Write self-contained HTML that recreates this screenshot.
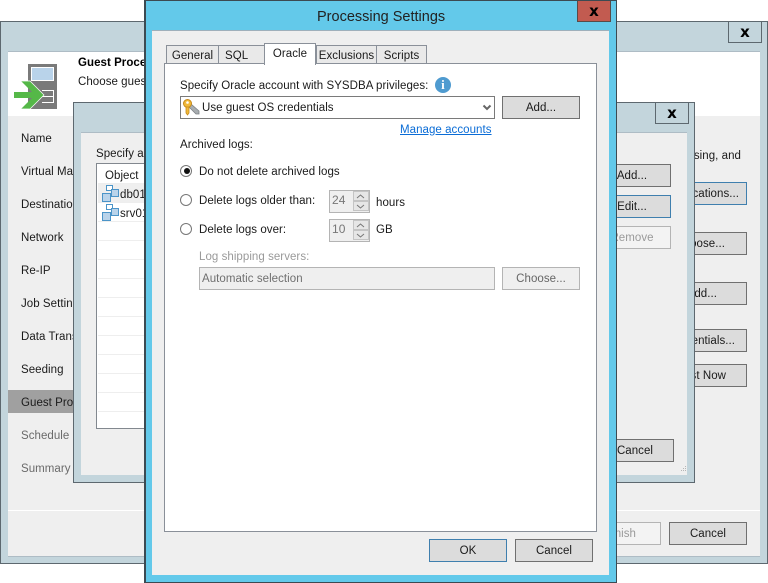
<!DOCTYPE html>
<html><head><meta charset="utf-8"><style>
html,body{margin:0;padding:0;width:768px;height:583px;overflow:hidden;background:#fff}
*{box-sizing:border-box}
body{position:relative;font:11.5px/16px "Liberation Sans",sans-serif;color:#1a1a1a;letter-spacing:.05px}
.a{position:absolute}
.t{position:absolute;white-space:nowrap;height:18px;line-height:18px}
.b{position:absolute;height:23px;border:1px solid #707070;background:#dcdcdc;text-align:center;line-height:23px;white-space:nowrap;overflow:hidden}
.r{text-align:right}
.f{border:1px solid #3f7fae}
.d{background:#f3f3f3;border-color:#b4b4b4;color:#9a9a9a}
.w{position:absolute;border:1px solid #5d686f;background:#c3d5dc}
.c{position:absolute;background:#efefef;border-top:1px solid #aebcc5}
.x{position:absolute;font:bold 15px/20px "DejaVu Sans",sans-serif;text-align:center;letter-spacing:0;color:#000}
.g{color:#6a6a6a}
.tab{position:absolute;top:45px;height:19px;background:#e9e9e9;border:1px solid #8a9099;border-bottom:0;text-align:center;line-height:20px}
.rd{position:absolute;left:180px;width:12px;height:12px;border:1px solid #777;border-radius:50%;background:#fff}
.sp{position:absolute;left:329px;width:41px;height:23px;border:1px solid #b4b4b4;background:#efefef;color:#777;padding-left:2px;line-height:19px;font-size:12px}
.sp i{position:absolute;left:23px;width:16px;height:10px;background:#e6e6e6;border:1px solid #c4c4c4}
.ln{position:absolute;left:98px;width:60px;height:1px;background:#eeeeee}
</style></head><body>

<!-- back window -->
<div class="w" style="left:0;top:21px;width:768px;height:543px"></div>
<div class="a" style="left:728px;top:22px;width:34px;height:21px;border:1px solid #5d686f;border-top:0"></div>
<div class="x" style="left:728px;top:22px;width:34px">x</div>
<div class="c" style="left:8px;top:51px;width:752px;height:506px;border-bottom:1px solid #aebcc5"></div>
<div class="a" style="left:8px;top:52px;width:752px;height:64px;background:#fff"></div>
<div class="a" style="left:8px;top:510px;width:752px;height:1px;background:#fff"></div>

<svg class="a" style="left:14px;top:64px" width="44" height="46" viewBox="0 0 44 46">
<rect x="14" y="0" width="29" height="45" fill="#7a7a7a"/>
<rect x="17.500" y="3.500" width="22" height="13" fill="#b9d3ea" stroke="#fff"/>
<path d="M28 26.500H40M28 32.500H40M28 38.500H40M39.500 26V39" stroke="#fff" fill="none"/>
<path d="M0 28h18L7 17h9l14 14-14 14H7l11-11H0z" fill="#55b848"/>
<path d="M7 17h9l14 14-14 14H7" fill="none" stroke="#fff" stroke-width=".7"/>
</svg>
<div class="t" style="left:78px;top:54px;font-weight:bold;color:#000">Guest Processing</div>
<div class="t" style="left:78px;top:73px">Choose guest processing options</div>

<div class="a" style="left:8px;top:390px;width:70px;height:23px;background:#a0a0a0"></div>
<div class="t" style="left:21px;top:130px">Name</div>
<div class="t" style="left:21px;top:163px">Virtual Machines</div>
<div class="t" style="left:21px;top:196px">Destination</div>
<div class="t" style="left:21px;top:229px">Network</div>
<div class="t" style="left:21px;top:262px">Re-IP</div>
<div class="t" style="left:21px;top:295px">Job Settings</div>
<div class="t" style="left:21px;top:328px">Data Transfer</div>
<div class="t" style="left:21px;top:361px">Seeding</div>
<div class="t" style="left:21px;top:394px">Guest Processing</div>
<div class="t g" style="left:21px;top:427px">Schedule</div>
<div class="t g" style="left:21px;top:460px">Summary</div>

<div class="t" style="right:27px;top:147px">Processing, and</div>
<div class="b f r" style="left:640px;top:182px;width:107px;padding-right:7px">Applications...</div>
<div class="b r" style="left:640px;top:232px;width:107px;padding-right:21px">Choose...</div>
<div class="b r" style="left:640px;top:282px;width:107px;padding-right:29px">Add...</div>
<div class="b r" style="left:640px;top:329px;width:107px;padding-right:11px">Credentials...</div>
<div class="b r" style="left:640px;top:364px;width:107px;padding-right:20px">Test Now</div>
<div class="b d r" style="left:590px;top:522px;width:71px;padding-right:24px">Finish</div>
<div class="b" style="left:669px;top:522px;width:78px">Cancel</div>

<!-- middle window -->
<div class="w" style="left:73px;top:102px;width:622px;height:381px"></div>
<div class="a" style="left:655px;top:103px;width:34px;height:21px;border:1px solid #5d686f;border-top:0"></div>
<div class="x" style="left:655px;top:103px;width:34px">x</div>
<div class="c" style="left:81px;top:132px;width:606px;height:343px"></div>
<div class="t" style="left:96px;top:145px">Specify a</div>
<div class="a" style="left:96px;top:163px;width:100px;height:266px;background:#fff;border:1px solid #82888f"></div>
<div class="a" style="left:98px;top:184px;width:60px;height:18px;background:#efefef"></div>
<div class="t" style="left:105px;top:167px">Object</div>
<div class="ln" style="top:183px"></div><div class="ln" style="top:202px"></div><div class="ln" style="top:221px"></div>
<div class="ln" style="top:240px"></div><div class="ln" style="top:259px"></div><div class="ln" style="top:278px"></div>
<div class="ln" style="top:297px"></div><div class="ln" style="top:316px"></div><div class="ln" style="top:335px"></div>
<div class="ln" style="top:354px"></div><div class="ln" style="top:373px"></div><div class="ln" style="top:392px"></div><div class="ln" style="top:411px"></div>
<svg class="a" style="left:102px;top:185px" width="17" height="17" viewBox="0 0 17 17"><rect x="4.500" y=".5" width="6" height="5" fill="#fff" stroke="#4b94c8"/><rect x="9.500" y="4.500" width="7" height="7" fill="#b9d3ea" stroke="#4b94c8"/><rect x=".5" y="8.500" width="8" height="8" fill="#b9d3ea" stroke="#4b94c8"/></svg>
<svg class="a" style="left:102px;top:204px" width="17" height="17" viewBox="0 0 17 17"><rect x="4.500" y=".5" width="6" height="5" fill="#fff" stroke="#4b94c8"/><rect x="9.500" y="4.500" width="7" height="7" fill="#b9d3ea" stroke="#4b94c8"/><rect x=".5" y="8.500" width="8" height="8" fill="#b9d3ea" stroke="#4b94c8"/></svg>
<div class="t" style="left:120px;top:186px">db01</div>
<div class="t" style="left:120px;top:205px">srv01</div>
<div class="b" style="left:593px;top:164px;width:78px">Add...</div>
<div class="b f" style="left:593px;top:195px;width:78px">Edit...</div>
<div class="b d" style="left:593px;top:226px;width:78px">Remove</div>
<div class="b" style="left:596px;top:439px;width:78px">Cancel</div>
<svg class="a" style="left:679px;top:465px" width="8" height="8"><path d="M6 1h1v1H6zM4 3h1v1H4zM6 3h1v1H6zM2 5h1v1H2zM4 5h1v1H4zM6 5h1v1H6z" fill="#b5b5b5"/></svg>

<!-- front window -->
<div class="a" style="left:144px;top:0;width:473px;height:583px;background:#63c9ea;border:1px solid #3c4a52;border-width:1px 1px 1px 2px"></div>
<div class="a" style="left:577px;top:1px;width:34px;height:21px;background:#c25b50;border:1px solid #5a4a48;border-top:0"></div>
<div class="x" style="left:577px;top:1px;width:34px">x</div>
<div class="t" style="left:317px;top:7px;font-size:14.5px;height:20px;line-height:20px;color:#222;letter-spacing:0">Processing Settings</div>
<div class="c" style="left:152px;top:30px;width:457px;height:545px;border-top:1px solid #9fb0bb"></div>

<div class="tab" style="left:166px;width:53px">General</div>
<div class="tab" style="left:218px;width:47px;text-align:left;padding-left:6px">SQL</div>
<div class="tab" style="left:316px;width:61px">Exclusions</div>
<div class="tab" style="left:376px;width:51px">Scripts</div>
<div class="a" style="left:164px;top:63px;width:433px;height:469px;background:#fff;border:1px solid #8a9099"></div>
<div class="a" style="left:264px;top:43px;width:52px;height:22px;background:#fff;border:1px solid #8a9099;border-bottom:0;text-align:center;line-height:20px">Oracle</div>

<div class="t" style="left:180px;top:77px">Specify Oracle account with SYSDBA privileges:</div>
<div class="a" style="left:435px;top:77px;width:16px;height:16px;border-radius:50%;background:#4f9bd0;color:#fff;font:bold 13px/16px 'Liberation Serif',serif;text-align:center">i</div>
<div class="a" style="left:180px;top:96px;width:315px;height:23px;background:#fff;border:1px solid #7a7a7a"></div>
<svg class="a" style="left:182px;top:98px" width="19" height="19" viewBox="0 0 19 19">
<path d="M9 6l8 7v3h-3l-7-7z" fill="#a8adb0" stroke="#7b8084" stroke-width=".8"/>
<circle cx="5.500" cy="5.500" r="4" fill="#f0b93a" stroke="#c78a1a"/><circle cx="5.500" cy="4.500" r="1.300" fill="#fff"/>
<path d="M4 9h3v6l-1.500 2L4 15z" fill="#f0b93a" stroke="#c78a1a" stroke-width=".8"/></svg>
<div class="t" style="left:202px;top:99px">Use guest OS credentials</div>
<svg class="a" style="left:482px;top:103px" width="10" height="9"><path d="M1.500 2.500l3.500 3.500 3.500-3.500" fill="none" stroke="#666" stroke-width="2"/></svg>
<div class="b" style="left:502px;top:96px;width:78px">Add...</div>
<div class="t" style="left:400px;top:121px;color:#0a6cd6;text-decoration:underline">Manage accounts</div>

<div class="t" style="left:180px;top:136px">Archived logs:</div>
<div class="rd" style="top:165px"></div><div class="a" style="left:184px;top:168px;width:6px;height:6px;border-radius:50%;background:#111"></div>
<div class="rd" style="top:194px"></div>
<div class="rd" style="top:223px"></div>
<div class="t" style="left:199px;top:163px">Do not delete archived logs</div>
<div class="t" style="left:199px;top:192px">Delete logs older than:</div>
<div class="t" style="left:199px;top:221px">Delete logs over:</div>
<div class="sp" style="top:190px">24<i style="top:0"></i><i style="top:10px"></i></div>
<div class="sp" style="top:219px">10<i style="top:0"></i><i style="top:10px"></i></div>
<svg class="a" style="left:353px;top:191px" width="15" height="21"><path d="M4 7l3.500-3L11 7M4 14l3.500 3 3.500-3" fill="none" stroke="#777"/></svg>
<svg class="a" style="left:353px;top:220px" width="15" height="21"><path d="M4 7l3.500-3L11 7M4 14l3.500 3 3.500-3" fill="none" stroke="#777"/></svg>
<div class="t" style="left:376px;top:194px">hours</div>
<div class="t" style="left:376px;top:221px">GB</div>
<div class="t" style="left:199px;top:248px;color:#9a9a9a">Log shipping servers:</div>
<div class="a" style="left:199px;top:267px;width:296px;height:23px;background:#efefef;border:1px solid #b4b4b4;color:#707070;padding-left:2px;line-height:22px">Automatic selection</div>
<div class="b" style="left:502px;top:267px;width:78px;background:#efefef;border-color:#b4b4b4;color:#666">Choose...</div>
<div class="b f" style="left:429px;top:539px;width:78px">OK</div>
<div class="b" style="left:515px;top:539px;width:78px">Cancel</div>
</body></html>
